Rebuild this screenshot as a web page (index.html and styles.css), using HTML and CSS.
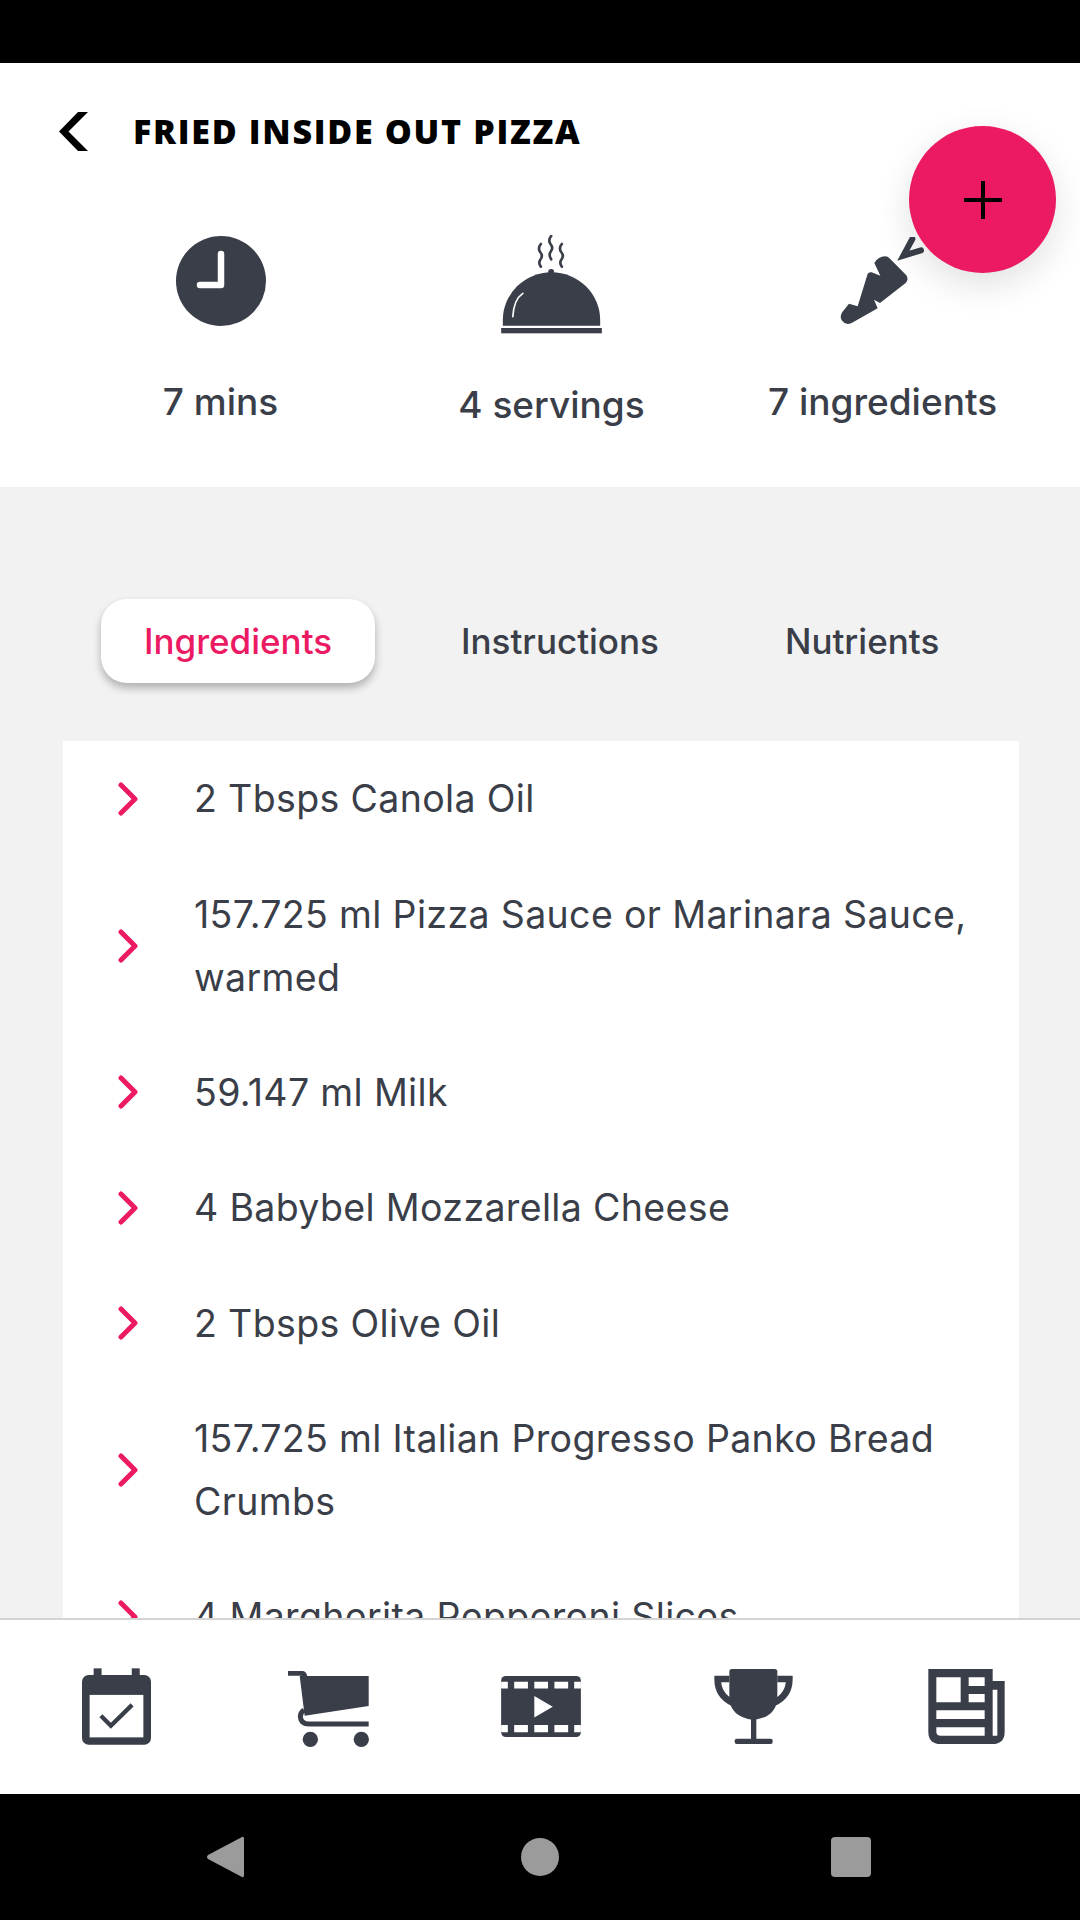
FILE: index.html
```html
<!DOCTYPE html>
<html lang="en">
<head>
<meta charset="utf-8">
<title>Fried Inside Out Pizza</title>
<link rel="stylesheet" href="styles.css">
</head>
<body>
<div class="phone">
  <div class="status-bar"></div>
  <header class="recipe-head">
    <div class="title-row">
      <svg class="back" viewBox="0 0 29 39"><path d="M19 0 H29 L9.5 19.5 L29 39 H19 L0 19.5 Z" fill="#000"/></svg>
      <h1 class="title">FRIED INSIDE OUT PIZZA</h1>
    </div>
    <div class="stats">
      <div class="stat">
        <svg class="ic-clock" viewBox="0 0 90 90"><circle cx="45" cy="45" r="45" fill="#3a3e48"/><path d="M45 18 V49 H24" fill="none" stroke="#fff" stroke-width="6.5" stroke-linecap="round" stroke-linejoin="round"/></svg>
        <span class="stat-label">7 mins</span>
      </div>
      <div class="stat">
        <svg class="ic-dish" viewBox="60 45 308 297">
          <path d="M68 317 V300 A146 143 0 0 1 360 300 V317 Z" fill="#3a3e48"/>
          <circle cx="213" cy="156" r="9" fill="#3a3e48"/>
          <rect x="63" y="324" width="302" height="16" fill="#3a3e48"/>
          <path d="M98 290 C100 255 110 232 128 220" fill="none" stroke="#fff" stroke-width="5" stroke-linecap="round"/>
          <path d="M182 72 Q172 84 180 96 Q190 108 180 120 Q174 130 182 140 M213 48 Q203 60 211 72 Q221 84 211 96 Q205 106 213 118 M245 72 Q235 84 243 96 Q253 108 243 120 Q237 130 245 140" fill="none" stroke="#3a3e48" stroke-width="8" stroke-linecap="round"/>
        </svg>
        <span class="stat-label">4 servings</span>
      </div>
      <div class="stat">
        <svg class="ic-carrot" viewBox="15 10 255 267">
          <path d="M118 88 Q130 68 150 68 Q158 68 165 75 L214 125 Q222 138 212 148 L135 208 L117 198 L128 224 L50 268 Q32 276 22 262 Q12 250 22 235 L42 210 L68 218 L98 120 Q102 114 110 116 L136 126 Z" fill="#3a3e48"/>
          <path d="M232 16 L205 66 L258 50" fill="none" stroke="#3a3e48" stroke-width="18" stroke-linecap="round"/>
        </svg>
        <span class="stat-label">7 ingredients</span>
      </div>
    </div>
    <button class="fab" type="button" aria-label="Add">
      <svg viewBox="0 0 38 38"><path d="M19 0 V38 M0 19 H38" stroke="#000" stroke-width="4" fill="none"/></svg>
    </button>
  </header>
  <main class="content">
    <nav class="tabs">
      <span class="tab tab-active">Ingredients</span>
      <span class="tab tab-instructions">Instructions</span>
      <span class="tab tab-nutrients">Nutrients</span>
    </nav>
    <ul class="ingredients">
      <li class="row"><svg class="chev" viewBox="0 0 20 34"><path d="M3 3 L17 17 L3 31" fill="none" stroke="#ec1a63" stroke-width="5" stroke-linecap="round" stroke-linejoin="round"/></svg><span>2 Tbsps Canola Oil</span></li>
      <li class="row"><svg class="chev" viewBox="0 0 20 34"><path d="M3 3 L17 17 L3 31" fill="none" stroke="#ec1a63" stroke-width="5" stroke-linecap="round" stroke-linejoin="round"/></svg><span>157.725 ml Pizza Sauce or Marinara Sauce,<br>warmed</span></li>
      <li class="row"><svg class="chev" viewBox="0 0 20 34"><path d="M3 3 L17 17 L3 31" fill="none" stroke="#ec1a63" stroke-width="5" stroke-linecap="round" stroke-linejoin="round"/></svg><span>59.147 ml Milk</span></li>
      <li class="row"><svg class="chev" viewBox="0 0 20 34"><path d="M3 3 L17 17 L3 31" fill="none" stroke="#ec1a63" stroke-width="5" stroke-linecap="round" stroke-linejoin="round"/></svg><span>4 Babybel Mozzarella Cheese</span></li>
      <li class="row"><svg class="chev" viewBox="0 0 20 34"><path d="M3 3 L17 17 L3 31" fill="none" stroke="#ec1a63" stroke-width="5" stroke-linecap="round" stroke-linejoin="round"/></svg><span>2 Tbsps Olive Oil</span></li>
      <li class="row"><svg class="chev" viewBox="0 0 20 34"><path d="M3 3 L17 17 L3 31" fill="none" stroke="#ec1a63" stroke-width="5" stroke-linecap="round" stroke-linejoin="round"/></svg><span>157.725 ml Italian Progresso Panko Bread<br>Crumbs</span></li>
      <li class="row"><svg class="chev" viewBox="0 0 20 34"><path d="M3 3 L17 17 L3 31" fill="none" stroke="#ec1a63" stroke-width="5" stroke-linecap="round" stroke-linejoin="round"/></svg><span>4 Margherita Pepperoni Slices</span></li>
    </ul>
  </main>
  <nav class="bottom-nav">
    <div class="nav-item">
      <svg class="ic-cal" viewBox="65 55 208 230">
        <rect x="100" y="55" width="24" height="40" fill="#3a3e48"/><rect x="215" y="55" width="24" height="40" fill="#3a3e48"/>
        <rect x="65" y="75" width="208" height="210" rx="20" fill="#3a3e48"/>
        <rect x="88" y="135" width="162" height="128" fill="#fff"/>
        <path d="M122 198 L152 228 L216 165" fill="none" stroke="#3a3e48" stroke-width="13"/>
      </svg>
    </div>
    <div class="nav-item">
      <svg class="ic-cart" viewBox="685 63 243 228">
        <path d="M685 70 H725 Q733 70 735 78 L738 100" fill="none" stroke="#3a3e48" stroke-width="15"/>
        <path d="M720 78 H927 V168 L735 197 Z" fill="#3a3e48"/>
        <path d="M733 180 Q722 188 722 200 Q724 222 748 222 H927" fill="none" stroke="#3a3e48" stroke-width="15"/>
        <circle cx="752" cy="268" r="23" fill="#3a3e48"/><circle cx="905" cy="268" r="23" fill="#3a3e48"/>
      </svg>
    </div>
    <div class="nav-item">
      <svg class="ic-film" viewBox="58 78 238 182">
        <rect x="58" y="78" width="238" height="182" rx="14" fill="#3a3e48"/>
        <path d="M58 95 H78 V115 H58 Z M97 95 H138 V115 H97 Z M157 95 H198 V115 H157 Z M217 95 H258 V115 H217 Z M276 95 H296 V115 H276 Z M58 224 H78 V246 H58 Z M97 224 H138 V246 H97 Z M157 224 H198 V246 H157 Z M217 224 H258 V246 H217 Z M276 224 H296 V246 H276 Z" fill="#fff"/>
        <path d="M157 138 L212 170 L157 202 Z" fill="#fff"/>
      </svg>
    </div>
    <div class="nav-item">
      <svg class="ic-trophy" viewBox="677 57 235 225">
        <path d="M722 87 H687 Q687 137 732 158 M866 87 H902 Q902 137 856 158" fill="none" stroke="#3a3e48" stroke-width="20"/>
        <path d="M722 65 Q722 57 730 57 H858 Q866 57 866 65 V140 Q866 200 795 210 Q722 200 722 140 Z" fill="#3a3e48"/>
        <rect x="787" y="205" width="16" height="65" fill="#3a3e48"/>
        <rect x="738" y="266" width="114" height="16" rx="6" fill="#3a3e48"/>
      </svg>
    </div>
    <div class="nav-item">
      <svg class="ic-news" viewBox="1298 57 229 225">
        <path d="M1298 57 H1491 V93 H1527 V245 Q1527 282 1490 282 H1335 Q1298 282 1298 245 Z" fill="#3a3e48"/>
        <path d="M1322 82 H1395 V157 H1322 Z M1419 82 H1467 V108 H1419 Z M1419 132 H1467 V157 H1419 Z M1322 181 H1467 V207 H1322 Z M1322 232 H1467 V257 H1335 Q1322 257 1322 245 Z M1491 119 H1505 V257 H1491 Z" fill="#fff"/>
      </svg>
    </div>
  </nav>
  <div class="system-nav">
    <svg class="sys-back" viewBox="0 0 37 42"><path d="M35 1 Q37 0 37 3 V39 Q37 42 35 41 L1 23 Q-1 21 1 19 Z" fill="#9b9b9b"/></svg>
    <span class="sys-home"></span>
    <span class="sys-recent"></span>
  </div>
</div>
</body>
</html>
```
FILE: styles.css
```css
* { box-sizing: border-box; }
html, body { margin: 0; padding: 0; }
body { width: 1080px; height: 1920px; overflow: hidden; background: #000; font-family: "Inter", "Noto Sans", sans-serif; color: #3a3e48; }
.phone { width: 1080px; height: 1920px; display: flex; flex-direction: column; }
.status-bar { height: 63px; background: #000; flex: none; }

.recipe-head { position: relative; flex: none; height: 424px; background: #fff; padding: 47px 32px 0 55px; }
.title-row { display: flex; align-items: center; height: 42px; margin-bottom: 83px; }
.back { width: 29px; height: 39px; margin-left: 4px; flex: none; }
.title { margin: 0 0 0 45px; font-family: "Open Sans", sans-serif; font-weight: 800; font-size: 34px; letter-spacing: 1.7px; color: #000; white-space: nowrap; }
.stats { display: grid; grid-template-columns: repeat(3, 331px); }
.stat { display: flex; flex-direction: column; align-items: center; }
.ic-clock { width: 90px; height: 90px; margin-top: 1px; margin-bottom: 54px; }
.ic-dish { width: 103px; height: 99px; margin-bottom: 49px; margin-left: -1px; }
.ic-carrot { width: 85px; height: 89px; margin-top: 2px; margin-bottom: 54px; }
.stat-label { font-size: 37px; line-height: 44px; font-weight: 500; white-space: nowrap; }
.fab { position: absolute; left: 909px; top: 63px; width: 147px; height: 147px; border: 0; padding: 0; border-radius: 50%; background: #ec1a63; box-shadow: 0 12px 36px rgba(0,0,0,.12); display: flex; align-items: center; justify-content: center; }
.fab svg { width: 38px; height: 38px; }

.content { flex: 1; min-height: 0; overflow: hidden; background: #f2f2f2; padding: 112px 61px 0 63px; }
.tabs { display: flex; align-items: center; height: 84px; margin-bottom: 58px; padding-left: 38px; }
.tab { font-size: 35px; font-weight: 500; white-space: nowrap; }
.tab-active { width: 274px; height: 84px; border-radius: 26px; background: #fff; color: #ec1a63; display: flex; align-items: center; justify-content: center; box-shadow: 0 5px 9px rgba(0,0,0,.28); }
.tab-instructions { margin-left: 86px; }
.tab-nutrients { margin-left: 126px; }

.ingredients { list-style: none; margin: 0; padding: 0; background: #fff; }
.row { display: flex; align-items: center; padding: 26.2px 0 26.2px 55px; font-size: 37.5px; line-height: 63px; letter-spacing: 0.35px; white-space: nowrap; }
.chev { width: 20px; height: 34px; flex: none; margin-right: 56px; }

.bottom-nav { flex: none; height: 176px; background: #fff; border-top: 2px solid #d4d4d4; display: grid; grid-template-columns: repeat(5, 212.5px); padding-left: 10px; }
.nav-item { display: flex; justify-content: center; padding-top: 48px; }
.ic-cal { width: 69px; height: 77px; }
.ic-cart { width: 81px; height: 76px; margin-top: 3px; }
.ic-film { width: 82px; height: 61px; margin-top: 8px; }
.ic-trophy { width: 81px; height: 75px; margin-top: 1px; }
.ic-news { width: 79px; height: 75px; margin-top: 1px; }

.system-nav { flex: none; height: 126px; background: #000; position: relative; display: flex; align-items: center; }
.sys-back { width: 37px; height: 42px; margin-left: 207px; }
.sys-home { width: 38px; height: 38px; border-radius: 50%; background: #9b9b9b; margin-left: 277px; }
.sys-recent { width: 40px; height: 40px; border-radius: 4px; background: #9b9b9b; margin-left: 272px; }
```
